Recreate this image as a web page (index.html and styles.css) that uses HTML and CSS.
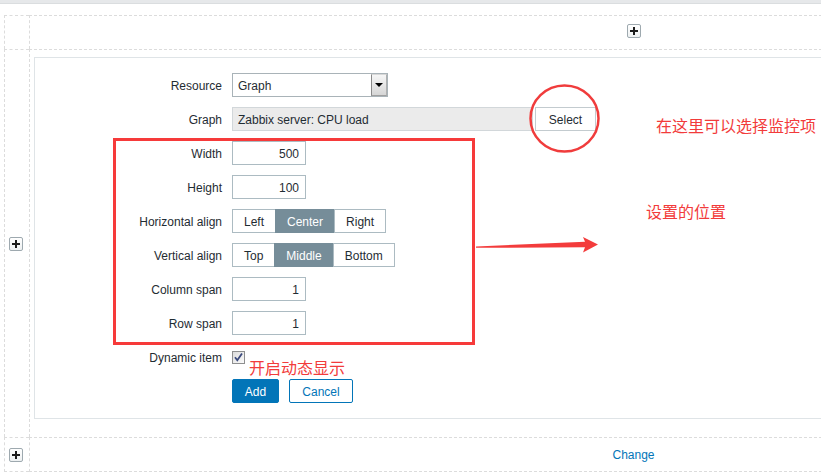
FILE: index.html
```html
<!DOCTYPE html>
<html>
<head>
<meta charset="utf-8">
<title>Widget</title>
<link rel="stylesheet" href="styles.css">
</head>
<body>
<div class="topbar"></div>
<div class="dash">
  <div class="cell side"></div>
  <div class="cell main head"><span class="plus"></span></div>

  <div class="cell side"><span class="plus"></span></div>
  <div class="cell main body">
    <div class="panel">
      <div class="form">
        <div class="lbl">Resource</div>
        <div class="ctl"><div class="select"><span>Graph</span><span class="drop"><i></i></span></div></div>

        <div class="lbl">Graph</div>
        <div class="ctl"><div class="ro">Zabbix server: CPU load</div><div class="btn-select">Select</div></div>

        <div class="lbl">Width</div>
        <div class="ctl"><div class="num">500</div></div>

        <div class="lbl">Height</div>
        <div class="ctl"><div class="num">100</div></div>

        <div class="lbl">Horizontal align</div>
        <div class="ctl seg"><span>Left</span><span class="on">Center</span><span>Right</span></div>

        <div class="lbl">Vertical align</div>
        <div class="ctl seg"><span>Top</span><span class="on">Middle</span><span>Bottom</span></div>

        <div class="lbl">Column span</div>
        <div class="ctl"><div class="num">1</div></div>

        <div class="lbl">Row span</div>
        <div class="ctl"><div class="num">1</div></div>

        <div class="lbl">Dynamic item</div>
        <div class="ctl"><span class="check"><svg width="11" height="11" viewBox="0 0 11 11"><path d="M2 5.2 L4.3 8.2 L9 1.5" fill="none" stroke="#3b4a7d" stroke-width="1.8"/></svg></span></div>

        <div class="lbl"></div>
        <div class="ctl actions"><span class="btn-add">Add</span><span class="btn-cancel">Cancel</span></div>
      </div>
    </div>
  </div>

  <div class="cell side last"><span class="plus"></span></div>
  <div class="cell main last foot"><span class="link">Change</span></div>
</div>

<svg class="marks" width="821" height="476" viewBox="0 0 821 476">
  <rect x="114.5" y="139.5" width="359" height="204" fill="none" stroke="#f63a3a" stroke-width="3"/>
  <ellipse cx="564.5" cy="118.5" rx="34" ry="33" fill="none" stroke="#f03c3c" stroke-width="2.5"/>
  <polygon points="476,246.5 585,241.8 583,237 598,244.5 583,252.5 585,247.3 476,247.8" fill="#f33c3c"/>
</svg>
<div class="note n1">在这里可以选择监控项</div>
<div class="note n2">设置的位置</div>
<div class="note n3">开启动态显示</div>
</body>
</html>
```
FILE: styles.css
```css
html, body {
  margin: 0;
  overflow: hidden;
}
body {
  width: 821px;
  height: 476px;
  position: relative;
  background: #fff;
  font-family: "Liberation Sans", Arial, sans-serif;
  font-size: 12px;
  color: #1f2c33;
}
.topbar {
  height: 3px;
  background: #e6e8ea;
  border-bottom: 1px solid #dadddf;
}
.dash {
  display: grid;
  grid-template-columns: 25px 1208px;
  grid-template-rows: 34px auto 35px;
  margin: 11px 0 0 4px;
  width: 1233px;
}
.cell {
  box-sizing: border-box;
  border-top: 1px dashed #dcdcdc;
  border-left: 1px dashed #dcdcdc;
}
.cell.last {
  border-bottom: 1px dashed #dcdcdc;
}
.side {
  display: flex;
  align-items: center;
  padding-left: 4px;
}
.head {
  display: flex;
  justify-content: center;
  align-items: center;
  padding-bottom: 4px;
}
.foot {
  display: flex;
  justify-content: center;
  align-items: center;
}
.link {
  color: #0275b8;
}
.plus {
  position: relative;
  display: block;
  width: 14px;
  height: 14px;
  box-sizing: border-box;
  border: 1px solid #9ea9af;
  border-radius: 2px;
  background: linear-gradient(#ffffff, #eef1f2);
}
.plus::before,
.plus::after {
  content: "";
  position: absolute;
  background: #1c1c1c;
}
.plus::before {
  left: 2px;
  top: 5px;
  width: 8px;
  height: 2px;
}
.plus::after {
  left: 5px;
  top: 2px;
  width: 2px;
  height: 8px;
}
.body {
  padding: 7px 0 18px 4px;
}
.panel {
  border: 1px solid #dfe4e7;
  padding: 15px 0;
}
.form {
  display: grid;
  grid-template-columns: 187px 1fr;
  grid-auto-rows: 24px;
  column-gap: 10px;
  row-gap: 10px;
}
.lbl {
  text-align: right;
  line-height: 26px;
  white-space: nowrap;
}
.ctl {
  display: flex;
  align-items: center;
}
.select {
  box-sizing: border-box;
  width: 156px;
  height: 24px;
  border: 1px solid #a9b3b8;
  display: flex;
  align-items: center;
  padding-left: 5px;
  padding-top: 1px;
  background: #fff;
}
.drop {
  margin-left: auto;
  margin-top: -1px;
  box-sizing: border-box;
  width: 16px;
  height: 22px;
  border-left: 1px solid #8a8a8a;
  border-right: 1px solid #b0b0b0;
  border-bottom: 1px solid #a0a0a0;
  border-top: 1px solid #d8d8d8;
  background: linear-gradient(#f6f6f6, #d6d6d6);
  display: flex;
  align-items: center;
  justify-content: center;
}
.drop i {
  display: block;
  width: 0;
  height: 0;
  border-left: 4px solid transparent;
  border-right: 4px solid transparent;
  border-top: 4px solid #000;
}
.ro {
  box-sizing: border-box;
  width: 301px;
  height: 24px;
  line-height: 24px;
  padding-left: 5px;
  background: #ebebeb;
  border: 1px solid #d2d7da;
}
.btn-select {
  box-sizing: border-box;
  width: 61px;
  height: 24px;
  line-height: 24px;
  margin-left: 2px;
  text-align: center;
  border: 1px solid #c3cbcf;
  background: #fff;
}
.num {
  box-sizing: border-box;
  width: 74px;
  height: 24px;
  line-height: 24px;
  text-align: right;
  padding-right: 6px;
  border: 1px solid #acbbc2;
  background: #fff;
}
.seg span {
  box-sizing: border-box;
  height: 24px;
  line-height: 24px;
  padding: 0 11px;
  border: 1px solid #acbbc2;
  background: #fff;
}
.seg span + span {
  margin-left: -1px;
}
.seg span.on {
  background: #768d99;
  border-color: #768d99;
  color: #fff;
}
.check {
  box-sizing: border-box;
  width: 13px;
  height: 13px;
  border: 1px solid #8e8f8f;
  background: linear-gradient(135deg, #dcdcdc, #fbfbfb);
  display: flex;
  align-items: center;
  justify-content: center;
}
.check svg {
  display: block;
}
.actions {
  gap: 10px;
}
.btn-add,
.btn-cancel {
  box-sizing: border-box;
  height: 24px;
  line-height: 24px;
  text-align: center;
  border: 1px solid #0275b8;
  border-radius: 2px;
}
.btn-add {
  width: 47px;
  background: #0275b8;
  color: #fff;
}
.btn-cancel {
  width: 64px;
  background: #fff;
  color: #0275b8;
}
.marks {
  position: absolute;
  left: 0;
  top: 0;
  pointer-events: none;
}
.note {
  position: absolute;
  font-family: "Noto Sans CJK SC", sans-serif;
  font-size: 16px;
  line-height: 16px;
  color: #f23b3b;
  white-space: nowrap;
}
.n1 {
  left: 656px;
  top: 117px;
}
.n2 {
  left: 646px;
  top: 203px;
}
.n3 {
  left: 249px;
  top: 359px;
}
```
